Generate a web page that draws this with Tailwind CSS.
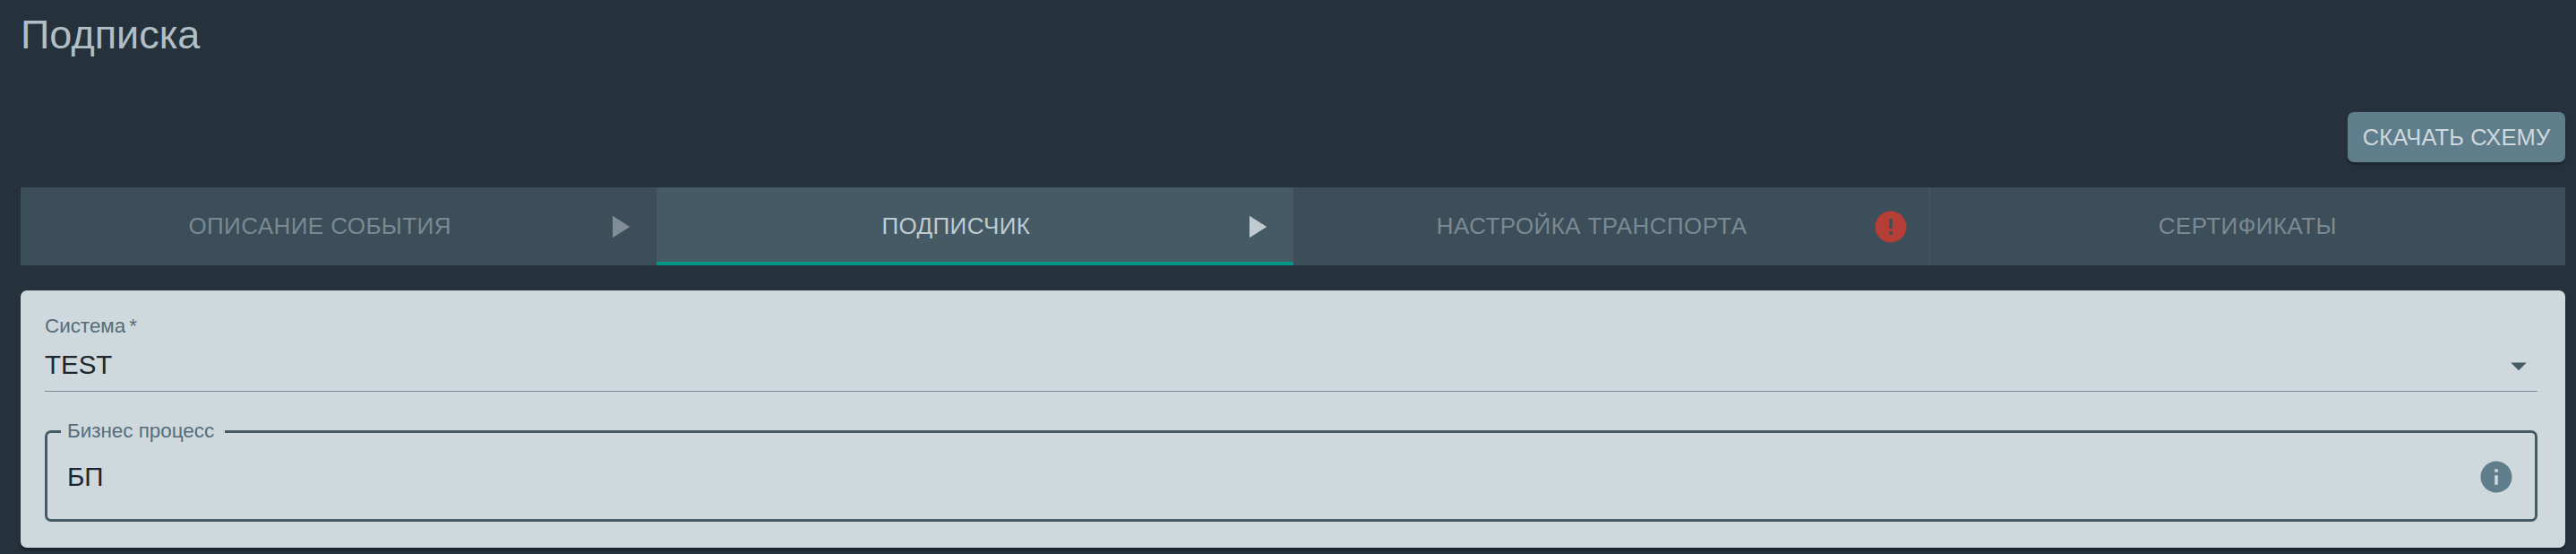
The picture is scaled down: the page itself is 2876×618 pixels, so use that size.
<!DOCTYPE html>
<html lang="ru">
<head>
  <meta charset="UTF-8">
  <meta name="viewport" content="width=device-width, initial-scale=1.0">
  <title>Подписка</title>
  <script src="https://cdn.jsdelivr.net/npm/@tailwindcss/browser@4"></script>
</head>
<body class="bg-[#25323b] font-['Liberation_Sans',Arial,sans-serif] overflow-hidden">
  <div class="h-[618px] pl-[23px] pr-3">
    <h1 class="text-[45px] leading-[49px] text-[#b0bec5] pt-[14px] h-[125px]">Подписка</h1>

    <div class="flex justify-end h-[84px]">
      <button class="h-[56px] w-[243px] rounded-[7px] bg-[#607d8b] text-[#cfd8dc] text-[25.5px] tracking-[0.1px] shadow-[0_3px_2px_rgba(0,0,0,0.25)]">СКАЧАТЬ СХЕМУ</button>
    </div>

    <div class="grid grid-cols-4 h-[87px] bg-[#3c4e59] text-[26px] tracking-[0.4px] text-[#7a8992]">
      <div class="flex items-center px-[21px]">
        <span class="flex-1 text-center">ОПИСАНИЕ СОБЫТИЯ</span>
        <svg class="w-[42px] h-[42px] fill-[#7f8d95]" viewBox="0 0 24 24"><path d="M8 5v14l11-7z"/></svg>
      </div>
      <div class="flex items-center px-[21px] bg-[#465a66] text-[#bfcbd1] border-b-4 border-[#009688] pt-1">
        <span class="flex-1 text-center">ПОДПИСЧИК</span>
        <svg class="w-[42px] h-[42px] fill-[#bfcbd1]" viewBox="0 0 24 24"><path d="M8 5v14l11-7z"/></svg>
      </div>
      <div class="flex items-center pl-[21px] pr-[22px]">
        <span class="flex-1 text-center">НАСТРОЙКА ТРАНСПОРТА</span>
        <svg class="w-[42px] h-[42px] fill-[#b53f37]" viewBox="0 0 24 24"><path d="M12 2C6.48 2 2 6.48 2 12s4.48 10 10 10 10-4.48 10-10S17.52 2 12 2zm1 15h-2v-2h2v2zm0-4h-2V7h2v6z"/></svg>
      </div>
      <div class="flex items-center justify-center border-l border-dotted border-[#4a5b66]">
        <span>СЕРТИФИКАТЫ</span>
      </div>
    </div>

    <div class="mt-7 h-[287px] rounded-[7px] bg-[#cfd8dc] pl-[27px] pr-[31px] pt-[28px] shadow-[0_3px_2px_rgba(0,0,0,0.3)]">
      <div class="relative h-[85px] border-b border-[#78909c]">
        <div class="text-[22.4px] leading-[24px] text-[#546e7a]">Система<span class="ml-1">*</span></div>
        <div class="mt-[15px] text-[29.5px] leading-[32px] text-[#1c272d]">TEST</div>
        <svg class="absolute right-0 top-[35px] w-[42px] h-[42px] fill-[#455a64]" viewBox="0 0 24 24"><path d="M7 10l5 5 5-5z"/></svg>
      </div>
      <fieldset class="mt-[32px] h-[113px] rounded-[7px] border-[3px] border-[#455a64] pl-[15px] pr-[22px] pb-[9px] flex items-center justify-between">
        <legend class="pl-[7px] pr-[12px] text-[22.4px] leading-[24px] text-[#546e7a]">Бизнес процесс</legend>
        <span class="pl-[7px] text-[29.5px] leading-[32px] text-[#1c272d] flex-1">БП</span>
        <svg class="w-[42px] h-[42px] fill-[#607d8b] shrink-0" viewBox="0 0 24 24"><path d="M12 2C6.48 2 2 6.48 2 12s4.48 10 10 10 10-4.48 10-10S17.52 2 12 2zm1 15h-2v-6h2v6zm0-8h-2V7h2v2z"/></svg>
      </fieldset>
    </div>
  </div>
</body>
</html>
